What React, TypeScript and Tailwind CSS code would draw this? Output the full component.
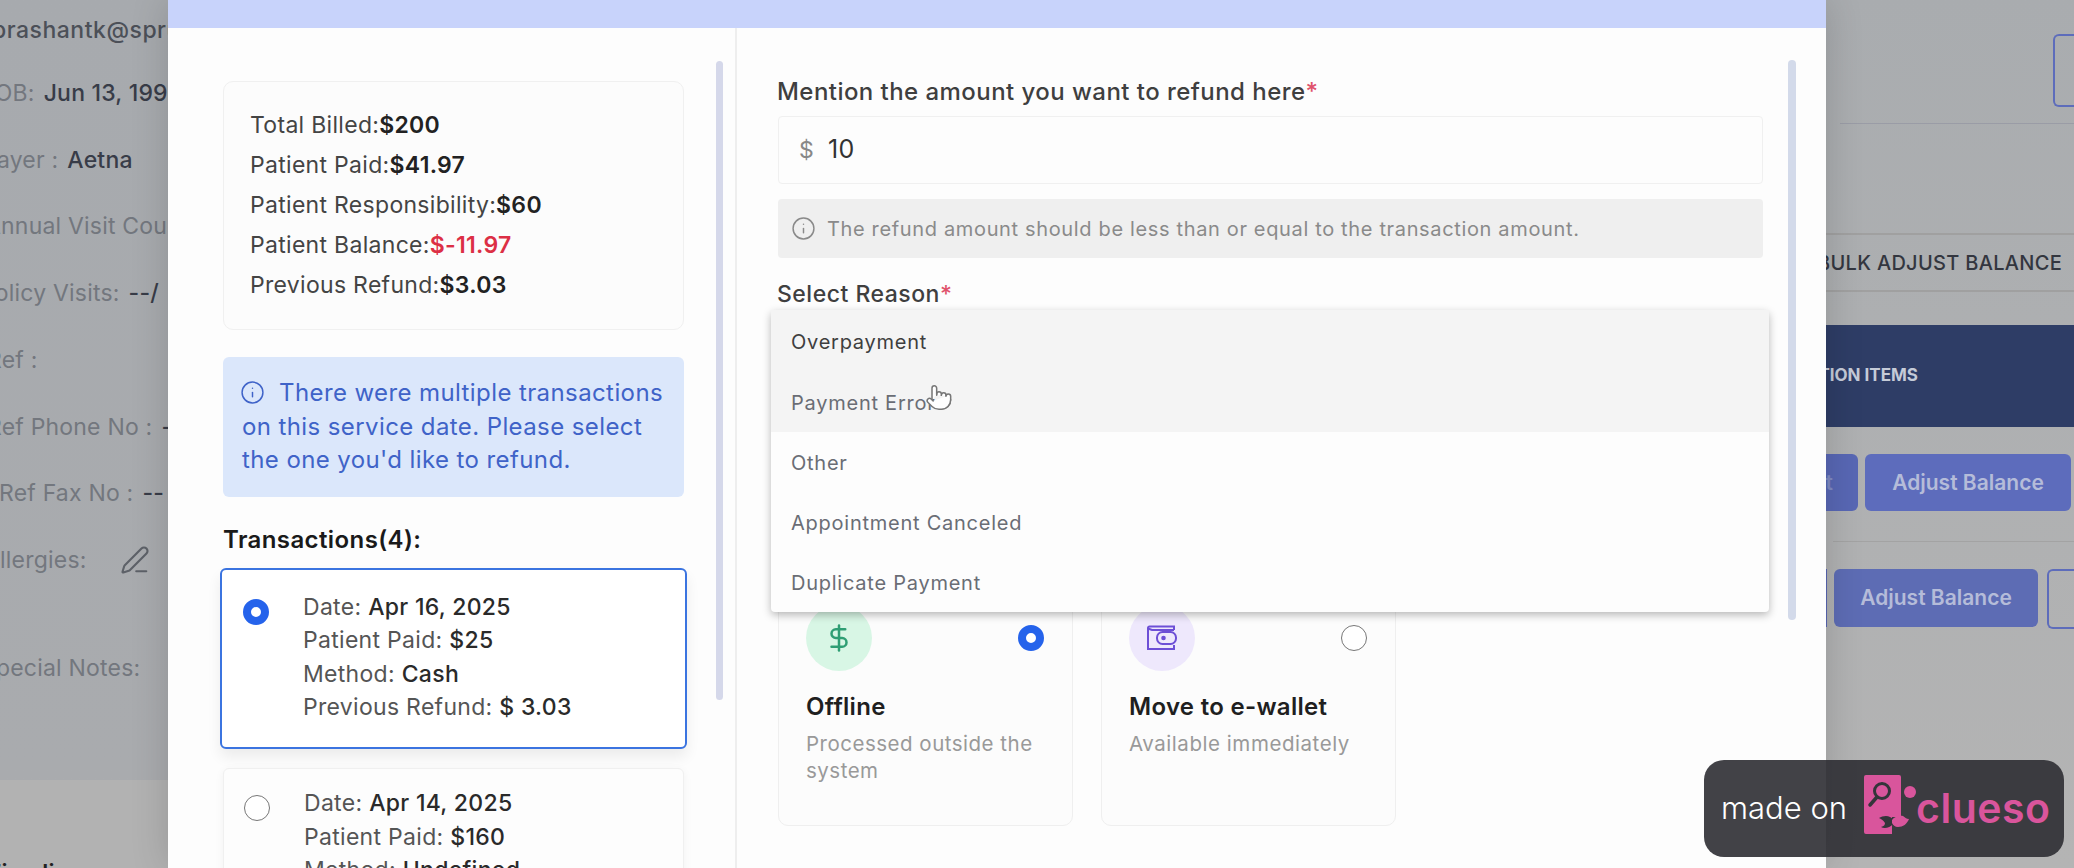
import React from 'react';
import { DollarSign, Info, PenLine, Pointer } from 'lucide-react';

const Radio = ({ checked, className = '' }: { checked?: boolean; className?: string }) =>
    checked ? (
        <div className={`w-[26px] h-[26px] shrink-0 rounded-full border-[8px] border-[#2563eb] bg-white ${className}`} />
    ) : (
        <div className={`w-[26px] h-[26px] shrink-0 rounded-full border-[1.5px] border-[#777] bg-white ${className}`} />
    );

const SummaryRow = ({ label, value, red }: { label: string; value: string; red?: boolean }) => (
    <div className="h-[40px] leading-[40px] text-[#444]">
        {label}
        <span className={`font-semibold ${red ? 'text-[#dc2f45]' : 'text-[#222]'}`}>{value}</span>
    </div>
);

const TxRow = ({ label, value }: { label: string; value: string }) => (
    <div className="h-[33.5px] leading-[33.5px] text-[#555]">
        {label} <span className="font-medium text-[#2a2a2a]">{value}</span>
    </div>
);

const BackdropRow = ({ label, value, offset }: { label: string; value?: string; offset: string }) => (
    <div className={`h-[66.7px] flex items-center whitespace-nowrap text-[#73777e] ${offset}`}>
        {label}
        {value && <span className="ml-[9px] font-medium text-[#383c48]">{value}</span>}
    </div>
);

const WalletIcon = () => (
    <svg width="30" height="26" viewBox="0 0 30 26" fill="none" stroke="#6d4fd6" strokeWidth="2">
        <path d="M27 5V1.5H2.5a1.5 1.5 0 0 0-1.5 1.5v21h26v-4" />
        <path d="M1 3.5 5 5H27" />
        <rect x="10" y="7" width="19" height="12" rx="5.5" />
        <circle cx="16.5" cy="13" r="1.3" fill="#6d4fd6" />
    </svg>
);

const CluesoLogo = () => (
    <svg width="56" height="60" viewBox="0 0 56 60">
        <path d="M2 0h33a2 2 0 0 1 2 2v40H28v17H2a2 2 0 0 1-2-2V2a2 2 0 0 1 2-2z" fill="#d9559c" />
        <circle cx="18" cy="16" r="7.5" fill="none" stroke="#34353a" strokeWidth="3" />
        <path d="M13 22 6 30" stroke="#34353a" strokeWidth="3.5" strokeLinecap="round" />
        <circle cx="46" cy="17" r="6" fill="#d9559c" />
        <path d="M15 43c3-2 8-3 11-1 2 1 3 2 3 3v4c-3 4-9 5-12 3 3-1 4-2 4-4-2-3-4-4-6-5z" fill="#34353a" />
        <path d="M28 45c2-3 7-5 11-4 2 1 3 3 6 3-2 5-6 8-11 8-3 0-5-2-6-4z" fill="#d9559c" />
    </svg>
);

export default function App() {
    return (
        <div className="relative w-[2074px] h-[868px] overflow-hidden flex bg-[#b2b2b2] [font-family:Inter,'Noto_Sans',sans-serif]">
            {/* page behind the modal */}
            <div className="w-[168px] shrink-0 overflow-hidden text-[23px] tracking-[0.2px]">
                <div className="h-[780px] bg-gradient-to-b from-[#a7aaae] to-[#a9abae] flex flex-col">
                    <div className="h-[60px] -ml-[8px] flex items-center font-medium text-[#4c5058] tracking-[0.5px] whitespace-nowrap">prashantk@spruce.care</div>
                    <BackdropRow label="DOB:" value="Jun 13, 1995" offset="-ml-[22px]" />
                    <BackdropRow label="Payer :" value="Aetna" offset="-ml-[18px]" />
                    <BackdropRow label="Annual Visit Count" offset="-ml-[15px]" />
                    <BackdropRow label="Policy Visits:" value="--/" offset="-ml-[20px]" />
                    <BackdropRow label="Ref :" offset="-ml-[13px]" />
                    <BackdropRow label="Ref Phone No :" value="--" offset="-ml-[13px]" />
                    <BackdropRow label="Ref Fax No :" value="--" offset="-ml-[1px]" />
                    <div className="h-[66.7px] flex items-center -ml-[16px] gap-[33px] text-[#73777e]">
                        Allergies:
                        <PenLine className="w-[30px] h-[30px] text-[#5d6168]" strokeWidth={1.7} />
                    </div>
                    <div className="mt-[57px] -ml-[19px] text-[#73777e] whitespace-nowrap">Special Notes:</div>
                </div>
                <div className="mt-[76px] -ml-[14px] font-semibold text-[#222]">Timeline:</div>
            </div>

            {/* modal */}
            <div className="relative z-10 w-[1658px] shrink-0 flex flex-col bg-[#fdfdfd] shadow-[0_0_36px_rgba(0,0,0,0.16)] text-[23px] tracking-[0.3px]">
                <div className="h-[28px] shrink-0 bg-[#c8d3fb]" />
                <div className="flex flex-1 min-h-0">
                    {/* left column */}
                    <div className="relative w-[567px] shrink-0 pl-[55px] pr-[51px] pt-[53px] overflow-hidden">
                        <div className="h-[249px] pt-[23px] pl-[26px] rounded-[10px] border border-[#f0f0f0] bg-[#fcfcfc]">
                            <SummaryRow label="Total Billed:" value="$200" />
                            <SummaryRow label="Patient Paid:" value="$41.97" />
                            <SummaryRow label="Patient Responsibility:" value="$60" />
                            <SummaryRow label="Patient Balance:" value="$-11.97" red />
                            <SummaryRow label="Previous Refund:" value="$3.03" />
                        </div>

                        <div className="mt-[27px] h-[140px] pt-[19px] pl-[19px] pr-[8px] rounded-[6px] bg-[#dbe7fb] text-[#3f63c8] text-[24px] tracking-[0.4px] leading-[33.5px]">
                            <Info className="inline-block w-[25px] h-[25px] -ml-[2px] mr-[14px] -mt-[3px]" strokeWidth={1.4} />
                            There were multiple transactions on this service date. Please select the one you'd like to refund.
                        </div>

                        <div className="mt-[27px] h-[32px] leading-[32px] text-[24px] tracking-[0.4px] font-semibold text-[#1a1a1a]">Transactions(4):</div>

                        <div className="mt-[12px] -mx-[3px] h-[181px] flex items-start pl-[21px] pt-[20.5px] rounded-[6px] border-[2.5px] border-[#3b74e0] bg-white shadow-[0_8px_14px_rgba(0,0,0,0.07)]">
                            <Radio checked className="mt-[8px]" />
                            <div className="ml-[34px]">
                                <TxRow label="Date:" value="Apr 16, 2025" />
                                <TxRow label="Patient Paid:" value="$25" />
                                <TxRow label="Method:" value="Cash" />
                                <TxRow label="Previous Refund:" value="$ 3.03" />
                            </div>
                        </div>

                        <div className="mt-[19px] h-[181px] flex items-start pl-[20px] pt-[18px] rounded-[6px] border border-[#f0f0f0] bg-[#fdfdfd] shadow-[0_2px_10px_rgba(0,0,0,0.05)]">
                            <Radio className="mt-[8px]" />
                            <div className="ml-[34px]">
                                <TxRow label="Date:" value="Apr 14, 2025" />
                                <TxRow label="Patient Paid:" value="$160" />
                                <TxRow label="Method:" value="Undefined" />
                            </div>
                        </div>

                        {/* scrollbar */}
                        <div className="absolute left-[548px] top-[33px] w-[7px] h-[639px] rounded-full bg-[#d5d8ea]" />
                    </div>

                    {/* right column */}
                    <div className="relative flex-1 border-l-2 border-[#eeeeee] pl-[41px] pt-[48px]">
                        <div className="w-[985px]">
                            <div className="h-[32px] -ml-[1px] leading-[32px] text-[24px] tracking-[0.45px] font-medium text-[#3f3f3f]">
                                Mention the amount you want to refund here<span className="text-[#e0526b]">*</span>
                            </div>
                            <div className="mt-[8px] h-[68px] flex items-center pl-[20px] rounded-[4px] border border-[#f0f0f0] bg-[#fdfdfd]">
                                <span className="text-[#888]">$</span>
                                <span className="ml-[14px] text-[25px] text-[#333]">10</span>
                            </div>
                            <div className="mt-[15px] h-[59px] flex items-center pl-[13px] rounded-[4px] bg-[#efefef] text-[20px] tracking-[0.65px] text-[#8a8a8a]">
                                <Info className="w-[25px] h-[25px] mr-[11px]" strokeWidth={1.4} />
                                The refund amount should be less than or equal to the transaction amount.
                            </div>

                            <div className="relative mt-[20px] h-[32px] leading-[32px] tracking-[0.5px] font-medium text-[#3f3f3f]">
                                <span className="-ml-[1px]">Select Reason</span>
                                <span className="text-[#e0526b]">*</span>
                                <div className="absolute z-20 top-full -left-[7px] -right-[6px] rounded-[4px] bg-[#fdfdfd] text-[20px] tracking-[0.75px] font-normal shadow-[0_3px_8px_rgba(0,0,0,0.28)]">
                                    <div className="h-[61px] pl-[20px] pt-[3px] flex items-center bg-[#f4f4f4] text-[#3e3e3e]">Overpayment</div>
                                    <div className="relative h-[61px] pl-[20px] pt-[2px] flex items-center bg-[#f4f4f4] text-[#6a6d75]">
                                        Payment Error
                                        <Pointer className="absolute left-[154px] top-[10px] w-[28px] h-[33px] fill-white text-[#777]" strokeWidth={1.3} />
                                    </div>
                                    <div className="h-[60px] pl-[20px] pt-[2px] flex items-center text-[#6a6d75]">Other</div>
                                    <div className="h-[60px] pl-[20px] pt-[2px] flex items-center text-[#6a6d75]">Appointment Canceled</div>
                                    <div className="h-[60px] pl-[20px] pt-[2px] flex items-center text-[#6a6d75]">Duplicate Payment</div>
                                </div>
                            </div>

                            <div className="mt-[274px] flex gap-[28px]">
                                <div className="w-[295px] h-[242px] pt-[20px] pl-[27px] pr-[28px] rounded-[10px] border border-[#efefef] bg-[#fcfcfc]">
                                    <div className="flex items-center justify-between">
                                        <div className="w-[66px] h-[66px] rounded-full bg-[#d8f6e5] flex items-center justify-center">
                                            <DollarSign className="w-[30px] h-[30px] text-[#2f9e74]" strokeWidth={2} />
                                        </div>
                                        <Radio checked />
                                    </div>
                                    <div className="mt-[20px] h-[32px] leading-[32px] text-[24px] font-semibold text-[#1f1f1f]">Offline</div>
                                    <div className="mt-[7px] text-[20.5px] tracking-[0.5px] leading-[27px] text-[#999]">Processed outside the system</div>
                                </div>
                                <div className="w-[295px] h-[242px] pt-[20px] pl-[27px] pr-[28px] rounded-[10px] border border-[#efefef] bg-[#fcfcfc]">
                                    <div className="flex items-center justify-between">
                                        <div className="w-[66px] h-[66px] rounded-full bg-[#eee8fc] flex items-center justify-center">
                                            <WalletIcon />
                                        </div>
                                        <Radio />
                                    </div>
                                    <div className="mt-[20px] h-[32px] leading-[32px] text-[24px] font-semibold text-[#1f1f1f]">Move to e-wallet</div>
                                    <div className="mt-[7px] text-[20.5px] tracking-[0.55px] leading-[27px] text-[#999]">Available immediately</div>
                                </div>
                            </div>
                        </div>

                        {/* scrollbar */}
                        <div className="absolute left-[1051px] top-[32px] w-[8px] h-[560px] rounded-full bg-[#d3daea]" />
                    </div>
                </div>
            </div>

            {/* page behind the modal, right side */}
            <div className="flex-1 min-w-0 overflow-hidden bg-gradient-to-b from-[#a9acaf] to-[#b4b4b4]">
                <div className="h-[124px] pt-[34px] border-b border-[#9a9ca6] ml-[14px] flex justify-end">
                    <div className="w-[21px] h-[73px] rounded-l-[6px] border-y-2 border-l-2 border-[#5d6cbb]" />
                </div>
                <div className="mt-[109px] h-[59px] border-y-2 border-[#a0a0a0] flex items-center justify-end pr-[12px] whitespace-nowrap text-[20px] font-medium tracking-[0.3px] text-[#33363f]">
                    BULK ADJUST BALANCE
                </div>
                <div className="mt-[33px] h-[102px] bg-[#2e3d66] flex items-center">
                    <div className="w-[92px] flex justify-end whitespace-nowrap text-[17px] font-bold text-[#c5cbd8]">ACTION ITEMS</div>
                </div>
                <div className="mt-[27px] h-[57px] flex gap-[7px]">
                    <div className="w-[32px] rounded-r-[6px] bg-[#5867b4] flex items-center justify-end pr-[25px] whitespace-nowrap text-[21px] font-semibold text-[#7f8ac2]">Print</div>
                    <div className="w-[206px] rounded-[6px] bg-[#5d6cbc] flex items-center justify-center text-[21px] font-semibold text-[#b5bcd9]">Adjust Balance</div>
                </div>
                <div className="mt-[30px] ml-[7px] border-t border-[#a3a3a3]" />
                <div className="mt-[27px] h-[60px] flex">
                    <div className="w-[1px] h-[58px] bg-[#5867b4]" />
                    <div className="ml-[7px] w-[204px] h-[58px] rounded-[6px] bg-[#5d6cb4] flex items-center justify-center text-[21px] font-semibold text-[#b5bcd9]">Adjust Balance</div>
                    <div className="ml-[9px] flex-1 rounded-l-[6px] border-y-2 border-l-2 border-[#5d6cbb]" />
                </div>
            </div>

            {/* watermark */}
            <div className="absolute z-30 left-[1704px] top-[760px] w-[360px] h-[97px] flex items-center pl-[17px] rounded-[20px] bg-[#2d2e33]/90 text-white">
                <span className="text-[31px] font-light">made on</span>
                <div className="ml-[17px] h-[60px] mb-[8px]">
                    <CluesoLogo />
                </div>
                <span className="-ml-[4px] text-[41px] font-semibold text-[#d9559c] tracking-[0.5px]">clueso</span>
            </div>
        </div>
    );
}
